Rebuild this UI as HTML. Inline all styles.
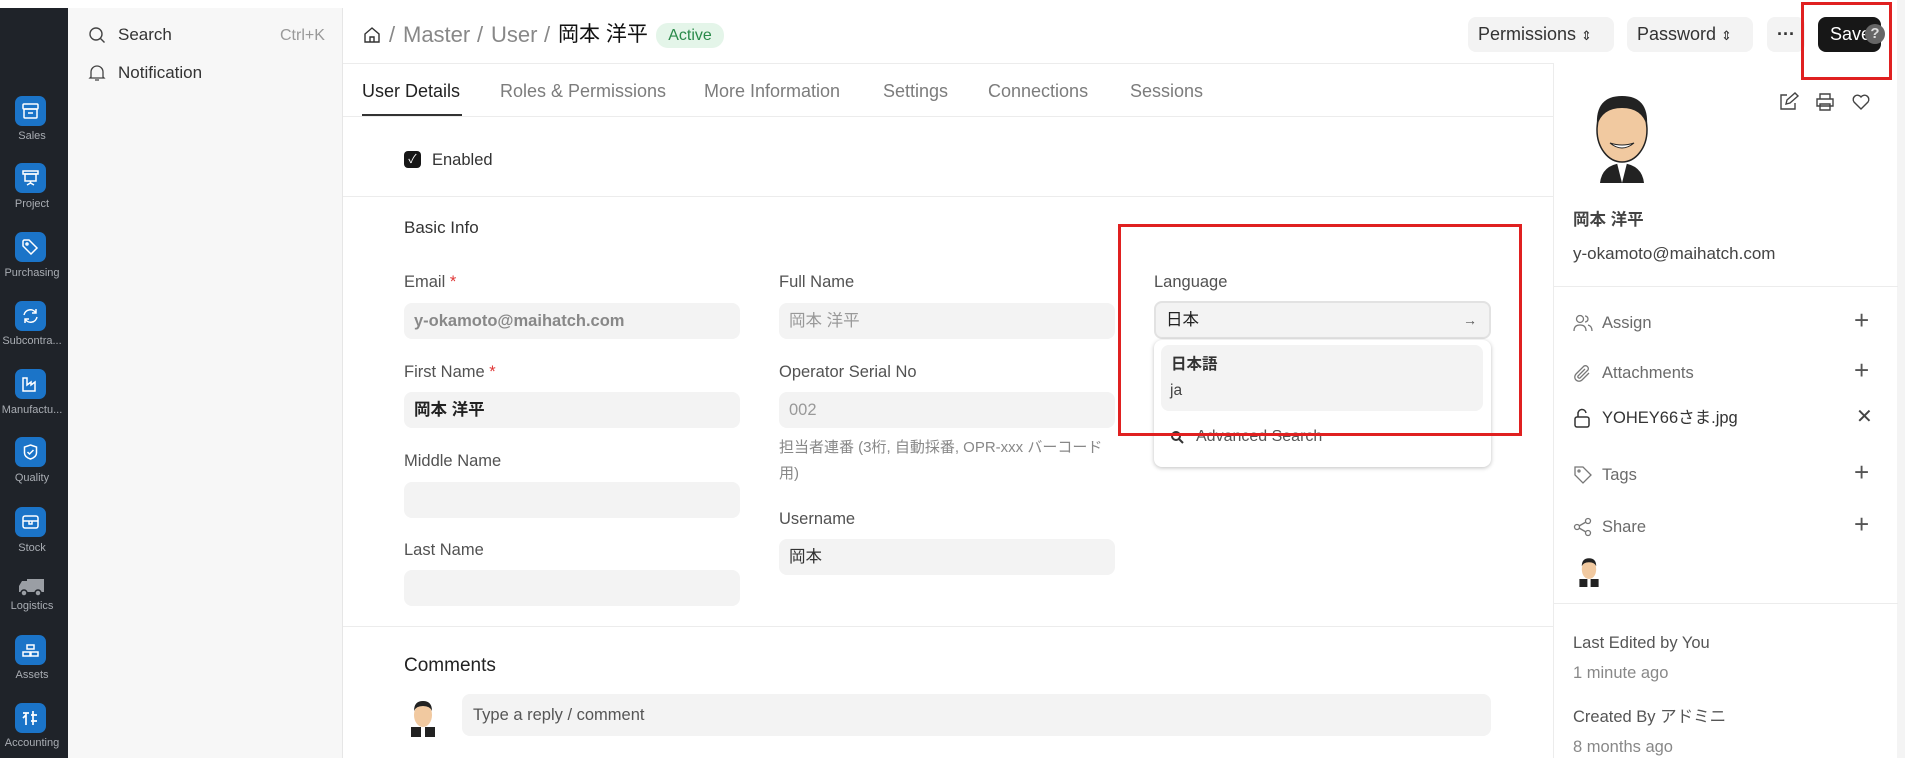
<!DOCTYPE html>
<html><head><meta charset="utf-8"><style>
*{box-sizing:border-box;margin:0;padding:0}
body{width:1905px;height:758px;overflow:hidden;background:#fff;font-family:"Liberation Sans","Noto Sans CJK JP",sans-serif;color:#333;position:relative;font-size:17px;line-height:1.2}
.a{position:absolute;white-space:nowrap}
#dark{left:0;top:8px;width:68px;height:750px;background:#1f2329}
.ic{position:absolute;left:15px;width:31px;height:30px;border-radius:7px;background:#1b74c8}
.il{position:absolute;width:68px;left:-2px;text-align:center;font-size:11px;color:#a9adb3;line-height:13px}
#side2{left:68px;top:8px;width:275px;height:750px;background:#f7f7f7;border-right:1px solid #e6e6e6}
.hl{position:absolute;height:1px;background:#ececec}
.lbl{position:absolute;font-size:16.5px;color:#525252;line-height:20px}
.inp{position:absolute;height:36px;background:#f3f3f3;border-radius:8px;font-size:16.5px;padding:0 10px;line-height:36px;color:#888}
.tab{position:absolute;top:80px;font-size:18px;color:#7c7c7c;line-height:22px}
.btn{position:absolute;top:17px;height:35px;background:#f3f3f3;border-radius:8px;font-size:18px;padding:0 10px;line-height:35px;color:#333}
.rs{position:absolute;left:1573px;font-size:16.5px;color:#6b6b6b;line-height:20px}
.plus{position:absolute;left:1854px;font-size:26px;color:#555;font-weight:300;line-height:26px}
.bc{position:absolute;top:22px;font-size:22px;color:#888;line-height:26px}
.ic svg{position:absolute;left:7px;top:7px}
</style></head><body>
<div class="a" id="dark"></div>
<div class="ic" style="top:96px"><svg width="17" height="16" viewBox="0 0 17 16" fill="none" stroke="#fff" stroke-width="1.5"><rect x="1" y="1" width="15" height="5" rx="1"/><rect x="2" y="6" width="13" height="9" rx="1"/><path d="M6 10h5"/></svg></div><div class="il" style="top:130px">Sales</div>
<div class="ic" style="top:163px"><svg width="17" height="16" viewBox="0 0 17 16" fill="none" stroke="#fff" stroke-width="1.5"><rect x="1" y="1" width="15" height="3"/><rect x="3" y="4" width="11" height="7"/><path d="M8.5 11v2 M5 15l3.5-2 3.5 2"/></svg></div><div class="il" style="top:198px">Project</div>
<div class="ic" style="top:232px"><svg width="17" height="16" viewBox="0 0 17 16" fill="none" stroke="#fff" stroke-width="1.5"><path d="M1 2v5l8 8 6-6-8-8H2z"/><circle cx="5" cy="5" r="1"/></svg></div><div class="il" style="top:267px">Purchasing</div>
<div class="ic" style="top:301px"><svg width="17" height="16" viewBox="0 0 17 16" fill="none" stroke="#fff" stroke-width="1.5"><path d="M2 7a6.5 6.5 0 0 1 12-2 M15 9a6.5 6.5 0 0 1-12 2 M14 1v4h-4 M3 15v-4h4"/></svg></div><div class="il" style="top:335px">Subcontra...</div>
<div class="ic" style="top:369px"><svg width="17" height="16" viewBox="0 0 17 16" fill="none" stroke="#fff" stroke-width="1.5"><path d="M1 15V2h4v7l4-3v3l4-3v9z"/></svg></div><div class="il" style="top:404px">Manufactu...</div>
<div class="ic" style="top:437px"><svg width="17" height="16" viewBox="0 0 17 16" fill="none" stroke="#fff" stroke-width="1.5"><path d="M8.5 1l6 2v6q0 4-6 6-6-2-6-6V3z M5.5 8l2 2 4-4"/></svg></div><div class="il" style="top:472px">Quality</div>
<div class="ic" style="top:507px"><svg width="17" height="16" viewBox="0 0 17 16" fill="none" stroke="#fff" stroke-width="1.5"><rect x="1" y="2" width="15" height="12" rx="2"/><path d="M1 7h15 M7 7v3h3V7"/></svg></div><div class="il" style="top:542px">Stock</div>
<svg class="a" style="left:17px;top:577px" width="28" height="20" viewBox="0 0 28 20"><path d="M10 2h17v13H10z M2 15V9l3-5h5v11z" fill="#9a9ea4"/><circle cx="7" cy="16" r="3" fill="#9a9ea4" stroke="#1f2329" stroke-width="1.5"/><circle cx="21" cy="16" r="3" fill="#9a9ea4" stroke="#1f2329" stroke-width="1.5"/></svg><div class="il" style="top:600px">Logistics</div>
<div class="ic" style="top:635px"><svg width="17" height="16" viewBox="0 0 17 16" fill="none" stroke="#fff" stroke-width="1.5"><rect x="5" y="3" width="7" height="4"/><rect x="1" y="10" width="7" height="4"/><rect x="9" y="10" width="7" height="4"/></svg></div><div class="il" style="top:669px">Assets</div>
<div class="ic" style="top:703px"><svg width="17" height="16" viewBox="0 0 17 16" fill="none" stroke="#fff" stroke-width="1.7"><path d="M1 3h6 M4 3v12 M1 8l3-3 M11 1v14 M9 5h6 M9 11h6"/></svg></div><div class="il" style="top:737px">Accounting</div>

<div class="a" id="side2"></div>
<svg class="a" style="left:88px;top:26px" width="18" height="18" viewBox="0 0 18 18"><circle cx="8" cy="8" r="6" fill="none" stroke="#444" stroke-width="1.4"/><path d="M12.5 12.5l4 4" stroke="#444" stroke-width="1.4"/></svg>
<div class="a" style="left:118px;top:25px;font-size:17px;color:#333;line-height:20px">Search</div>
<div class="a" style="left:280px;top:26px;font-size:16px;color:#999;line-height:20px">Ctrl+K</div>
<svg class="a" style="left:88px;top:64px" width="18" height="19" viewBox="0 0 18 19"><path d="M3 13V8a6 6 0 0 1 12 0v5l1 1H2z M7 16h4" fill="none" stroke="#444" stroke-width="1.3"/></svg>
<div class="a" style="left:118px;top:63px;font-size:17px;color:#333;line-height:20px">Notification</div>

<!-- header -->
<svg class="a" style="left:363px;top:26px" width="18" height="18" viewBox="0 0 18 18"><path d="M2 8L9 2l7 6v8H2z M7 16v-5h4v5" fill="none" stroke="#333" stroke-width="1.4"/></svg>
<div class="bc" style="left:389px">/</div>
<div class="bc" style="left:403px">Master</div>
<div class="bc" style="left:477px">/</div>
<div class="bc" style="left:491px">User</div>
<div class="bc" style="left:544px">/</div>
<div class="bc" style="left:558px;color:#111;font-size:21px">岡本 洋平</div>
<div class="a" style="left:656px;top:23px;height:25px;width:68px;border-radius:12px;background:#e4f5e9;color:#2a8a4a;font-size:16px;text-align:center;line-height:25px">Active</div>
<div class="btn" style="left:1468px;width:146px">Permissions <span style="font-size:13px">⇕</span></div>
<div class="btn" style="left:1627px;width:126px">Password <span style="font-size:13px">⇕</span></div>
<div class="btn" style="left:1767px;width:38px;text-align:center;padding:0;font-weight:bold">···</div>
<div class="btn" style="left:1818px;width:63px;background:#171717;color:#fff;padding:0 12px">Save</div>
<div class="a" style="left:1865px;top:24px;width:20px;height:20px;border-radius:50%;background:#666;color:#ddd;font-size:15px;text-align:center;line-height:20px;font-weight:bold">?</div>
<div class="a" style="left:1801px;top:2px;width:91px;height:78px;border:3px solid #e02020"></div>
<div class="hl" style="left:343px;top:63px;width:1210px"></div>
<div class="a" style="left:1897px;top:0;width:8px;height:758px;background:#f4f4f4"></div>

<!-- tabs -->
<div class="tab" style="left:362px;color:#222">User Details</div>
<div class="a" style="left:362px;top:114px;width:100px;height:2px;background:#333"></div>
<div class="tab" style="left:500px">Roles &amp; Permissions</div>
<div class="tab" style="left:704px">More Information</div>
<div class="tab" style="left:883px">Settings</div>
<div class="tab" style="left:988px">Connections</div>
<div class="tab" style="left:1130px">Sessions</div>
<div class="hl" style="left:343px;top:116px;width:1210px"></div>

<div class="a" style="left:404px;top:151px;width:17px;height:17px;border-radius:4px;background:#171717;color:#fff;font-size:12px;text-align:center;line-height:17px">✓</div>
<div class="a" style="left:432px;top:150px;font-size:16.5px;color:#333;line-height:20px">Enabled</div>
<div class="hl" style="left:343px;top:196px;width:1210px"></div>
<div class="a" style="left:404px;top:218px;font-size:17px;color:#333;line-height:20px">Basic Info</div>

<div class="lbl" style="left:404px;top:272px">Email <span style="color:#e03636">*</span></div>
<div class="inp" style="left:404px;top:303px;width:336px;font-weight:bold;color:#888">y-okamoto@maihatch.com</div>
<div class="lbl" style="left:404px;top:362px">First Name <span style="color:#e03636">*</span></div>
<div class="inp" style="left:404px;top:392px;width:336px;font-weight:bold;color:#222">岡本 洋平</div>
<div class="lbl" style="left:404px;top:451px">Middle Name</div>
<div class="inp" style="left:404px;top:482px;width:336px"></div>
<div class="lbl" style="left:404px;top:540px">Last Name</div>
<div class="inp" style="left:404px;top:570px;width:336px"></div>

<div class="lbl" style="left:779px;top:272px">Full Name</div>
<div class="inp" style="left:779px;top:303px;width:336px;color:#999">岡本 洋平</div>
<div class="lbl" style="left:779px;top:362px">Operator Serial No</div>
<div class="inp" style="left:779px;top:392px;width:336px;color:#999">002</div>
<div class="a" style="left:779px;top:435px;font-size:15px;color:#888;line-height:26px;white-space:normal;width:330px">担当者連番 (3桁, 自動採番, OPR-xxx バーコード用)</div>
<div class="lbl" style="left:779px;top:509px">Username</div>
<div class="inp" style="left:779px;top:539px;width:336px;color:#333">岡本</div>

<div class="lbl" style="left:1154px;top:272px">Language</div>
<div class="inp" style="left:1154px;top:301px;width:337px;height:38px;border:2px solid #e2e2e2;color:#222;line-height:34px">日本<span style="position:absolute;right:12px;font-size:14px;color:#555">→</span></div>
<div class="a" style="left:1154px;top:340px;width:337px;height:127px;background:#fff;border-radius:8px;box-shadow:0 1px 4px rgba(0,0,0,.25)"></div>
<div class="a" style="left:1161px;top:345px;width:322px;height:66px;background:#f3f3f3;border-radius:8px"></div>
<div class="a" style="left:1171px;top:356px;font-size:15.5px;font-weight:bold;color:#333;line-height:18px">日本語</div>
<div class="a" style="left:1170px;top:382px;font-size:15.5px;color:#444;line-height:18px">ja</div>
<svg class="a" style="left:1170px;top:430px" width="14" height="14" viewBox="0 0 14 14"><circle cx="6" cy="6" r="4" fill="none" stroke="#333" stroke-width="2"/><path d="M9 9l4 4" stroke="#333" stroke-width="2"/></svg>
<div class="a" style="left:1196px;top:428px;font-size:16px;color:#555;line-height:18px">Advanced Search</div>
<div class="a" style="left:1118px;top:224px;width:404px;height:212px;border:3px solid #e02020"></div>

<div class="hl" style="left:343px;top:626px;width:1210px"></div>
<div class="a" style="left:404px;top:655px;font-size:19px;color:#222;line-height:22px">Comments</div>
<svg class="a" style="left:408px;top:697px" width="30" height="40" viewBox="0 0 30 40"><rect x="3" y="30" width="24" height="10" fill="#222"/><rect x="13" y="30" width="4" height="10" fill="#fff"/><ellipse cx="15" cy="18" rx="9" ry="12" fill="#f1c9a0"/><path d="M6 14q0-10 9-10t9 10q-2-5-9-5t-9 5z" fill="#222"/></svg>
<div class="inp" style="left:462px;top:694px;width:1029px;height:42px;color:#555;line-height:42px;padding:0 11px">Type a reply / comment</div>

<!-- right panel -->
<div class="a" style="left:1553px;top:63px;width:1px;height:695px;background:#ececec"></div>
<svg class="a" style="left:1590px;top:88px" width="64" height="95" viewBox="0 0 64 95"><path d="M10 95q2-18 22-20q20 2 22 20z" fill="#222"/><path d="M27 75l5 20 5-20z" fill="#fff"/><ellipse cx="32" cy="42" rx="25" ry="32" fill="#f1c9a0" stroke="#222" stroke-width="1.5"/><path d="M7 38q-2-30 25-30t25 30q-5-18-25-18t-25 18z" fill="#222"/><path d="M20 55q12 10 24 0q-12 4-24 0z" fill="#fff" stroke="#222"/></svg>
<svg class="a" style="left:1778px;top:92px" width="100" height="20" viewBox="0 0 100 20"><path d="M9 3H3v14h14v-6 M8 12l1-4 8-7 3 3-8 7z" fill="none" stroke="#444" stroke-width="1.4"/><path d="M42 7V2h10v5 M39 7h16v7H39z M42 12h10v6H42z" fill="none" stroke="#444" stroke-width="1.4"/><path d="M83 17l-7-7a4 4 0 0 1 7-5 4 4 0 0 1 7 5z" fill="none" stroke="#444" stroke-width="1.4"/></svg>
<div class="a" style="left:1573px;top:210px;font-size:16.5px;font-weight:bold;color:#444;line-height:20px">岡本 洋平</div>
<div class="a" style="left:1573px;top:244px;font-size:17px;color:#444;line-height:20px">y-okamoto@maihatch.com</div>
<div class="hl" style="left:1553px;top:286px;width:345px"></div>
<svg class="a" style="left:1573px;top:313px" width="20" height="20" viewBox="0 0 20 20" fill="none" stroke="#777" stroke-width="1.3"><circle cx="7" cy="6" r="3.5"/><path d="M1 18q0-6 6-6t6 6 M12 3a3 3 0 0 1 0 6 M15 12q4 1 4 6"/></svg>
<div class="rs" style="left:1602px;top:313px">Assign</div><div class="plus" style="top:307px">+</div>
<svg class="a" style="left:1573px;top:364px" width="20" height="20" viewBox="0 0 20 20" fill="none" stroke="#777" stroke-width="1.3"><path d="M16 9l-7 7a4 4 0 0 1-6-6l8-8a3 3 0 0 1 4 4l-8 8a1.5 1.5 0 0 1-2-2l7-7"/></svg>
<div class="rs" style="left:1602px;top:363px">Attachments</div><div class="plus" style="top:357px">+</div>
<svg class="a" style="left:1573px;top:408px" width="18" height="20" viewBox="0 0 18 20" fill="none" stroke="#333" stroke-width="1.5"><rect x="2" y="9" width="14" height="10" rx="2"/><path d="M5 9V6a4 4 0 0 1 8-1"/></svg>
<div class="rs" style="left:1602px;top:408px;color:#333">YOHEY66さま.jpg</div><div class="a" style="left:1856px;top:406px;font-size:20px;color:#444;line-height:22px">✕</div>
<svg class="a" style="left:1573px;top:465px" width="20" height="20" viewBox="0 0 20 20" fill="none" stroke="#777" stroke-width="1.3"><path d="M2 2h8l8 8-8 8-8-8z"/><circle cx="6" cy="6" r="1"/></svg>
<div class="rs" style="left:1602px;top:465px">Tags</div><div class="plus" style="top:459px">+</div>
<svg class="a" style="left:1573px;top:517px" width="20" height="20" viewBox="0 0 20 20" fill="none" stroke="#777" stroke-width="1.3"><circle cx="15" cy="4" r="2.5"/><circle cx="4" cy="10" r="2.5"/><circle cx="15" cy="16" r="2.5"/><path d="M6 9l7-4 M6 11l7 4"/></svg>
<div class="rs" style="left:1602px;top:517px">Share</div><div class="plus" style="top:511px">+</div>
<svg class="a" style="left:1576px;top:555px" width="26" height="32" viewBox="0 0 30 40"><rect x="3" y="30" width="24" height="10" fill="#222"/><rect x="13" y="30" width="4" height="10" fill="#fff"/><ellipse cx="15" cy="18" rx="9" ry="12" fill="#f1c9a0"/><path d="M6 14q0-10 9-10t9 10q-2-5-9-5t-9 5z" fill="#222"/></svg>
<div class="hl" style="left:1553px;top:603px;width:345px"></div>
<div class="rs" style="top:633px;color:#555">Last Edited by You</div>
<div class="rs" style="top:663px;color:#888">1 minute ago</div>
<div class="rs" style="top:707px;color:#555">Created By アドミニ</div>
<div class="rs" style="top:737px;color:#888">8 months ago</div>
</body></html>
